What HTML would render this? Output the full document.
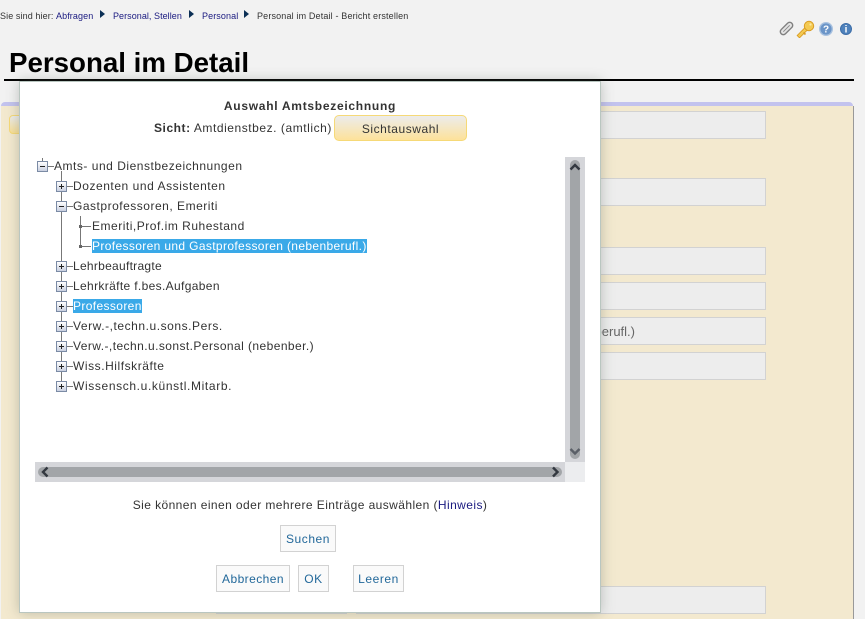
<!DOCTYPE html>
<html lang="de">
<head>
<meta charset="utf-8">
<title>Personal im Detail</title>
<style>
html,body{margin:0;padding:0}
body{width:865px;height:619px;position:relative;overflow:hidden;background:#f2f2f2;font-family:"Liberation Sans",sans-serif}
.a{position:absolute;white-space:nowrap}
.crumb{font-size:9px;top:11px;line-height:11px;color:#333;letter-spacing:.1px}
.crumb.l{color:#1a1a80}
.tri{position:absolute;top:10px;width:0;height:0;border-left:5px solid #0b2f55;border-top:4px solid transparent;border-bottom:4px solid transparent}
.inp{position:absolute;left:560px;width:204px;height:26px;background:#ededed;border:1px solid #d2d2d2}
#modal{position:absolute;left:19px;top:81px;width:580px;height:530px;background:#fff;border:1px solid #b9c6c0;box-shadow:0 0 12px rgba(90,100,90,.35)}
.t{position:absolute;font-size:12px;line-height:14px;letter-spacing:.55px;color:#333;white-space:nowrap}
.sel{background:#3aa9e8;color:#fff}
.box{position:absolute;width:9px;height:9px;border:1px solid #7b8ba5;background:linear-gradient(#fff,#c9d0e0)}
.box:before{content:"";position:absolute;left:2px;top:4px;width:5px;height:1px;background:#222}
.box.p:after{content:"";position:absolute;left:4px;top:2px;width:1px;height:5px;background:#222}
.h{position:absolute;height:1px;background:#777}
.v{position:absolute;width:1px;background:#777}
.dot{position:absolute;width:3px;height:3px;background:#666}
.btn{position:absolute;box-sizing:border-box;height:27px;border:1px solid #d2d2d2;background:#fafafa;color:#22689a;font-size:12px;line-height:27px;text-align:center;letter-spacing:.55px;white-space:nowrap}
</style>
</head>
<body>
<div class="a crumb" style="left:0">Sie sind hier:</div>
<div class="a crumb l" style="left:56px">Abfragen</div>
<div class="tri" style="left:100px"></div>
<div class="a crumb l" style="left:113px;letter-spacing:.05px">Personal, Stellen</div>
<div class="tri" style="left:189px"></div>
<div class="a crumb l" style="left:202px">Personal</div>
<div class="tri" style="left:244px"></div>
<div class="a crumb" style="left:257px;letter-spacing:.155px">Personal im Detail - Bericht erstellen</div>

<svg class="a" style="left:778px;top:20px" width="80" height="18" viewBox="0 0 80 18">
<g transform="rotate(-45 8.500 8.500)"><rect x="1" y="5.500" width="15" height="6" rx="3" fill="#e4e4e4" stroke="#808080" stroke-width="1.400"/><path d="M4 8.500h9" stroke="#8a8a8a" stroke-width="1"/></g>
<path d="M27.500 9.500l-6 6" stroke="#d99c24" stroke-width="4.200" stroke-linecap="square"/>
<path d="M27.500 9.500l-6 6" stroke="#f4ca52" stroke-width="2.400" stroke-linecap="square"/>
<path d="M25.500 12.500l2 2" stroke="#d99c24" stroke-width="1.600"/>
<circle cx="31" cy="6" r="4.700" fill="#f4ca52" stroke="#d99c24" stroke-width="1"/>
<circle cx="32.500" cy="4.500" r="1.100" fill="#fbe9a8"/>
<circle cx="48" cy="9" r="6.300" fill="#6b95c8" stroke="#a9c2e0" stroke-width="1.400"/>
<text x="48" y="12.500" font-family="Liberation Sans" font-size="10" font-weight="bold" fill="#fff" text-anchor="middle">?</text>
<circle cx="68" cy="9" r="5.500" fill="#4f82bc" stroke="#3d6ea8" stroke-width="1"/>
<text x="68" y="12.500" font-family="Liberation Sans" font-size="10" font-weight="bold" fill="#fff" text-anchor="middle">i</text>
</svg>

<div class="a" style="left:9px;top:47px;font-size:27.7px;line-height:32px;font-weight:bold;color:#000">Personal im Detail</div>
<div class="a" style="left:4px;top:79px;width:850px;height:2px;background:#000"></div>

<div class="a" style="left:1px;top:102px;width:852px;height:4px;background:#c3c3ee;border-radius:4px 4px 0 0"></div>
<div class="a" style="left:1px;top:106px;width:852px;height:513px;background:#f3e9cf;border-right:1px solid #999"></div>
<div class="a" style="left:9px;top:115px;width:30px;height:17px;border:1px solid #f6d977;border-radius:4px;background:linear-gradient(#ececec,#f9df95)"></div>

<div class="inp" style="top:111px"></div>
<div class="inp" style="top:178px"></div>
<div class="inp" style="top:247px"></div>
<div class="inp" style="top:282px"></div>
<div class="inp" style="top:317px"></div>
<div class="a" style="right:230px;top:325px;font-size:13px;line-height:14px;color:#666">(nebenberufl.)</div>
<div class="inp" style="top:352px"></div>
<div class="inp" style="top:586px;left:216px;width:129px"></div>
<div class="inp" style="top:586px;left:356px;width:408px"></div>

<div id="modal"></div>

<div class="a" style="left:20px;width:580px;top:99px;text-align:center;font-size:12px;line-height:14px;font-weight:bold;color:#333;letter-spacing:.72px">Auswahl Amtsbezeichnung</div>
<div class="t" style="left:154px;top:121px"><b>Sicht:</b> Amtdienstbez. (amtlich)</div>
<div class="a" style="left:334px;top:115px;box-sizing:border-box;width:133px;height:26px;border:1px solid #f6d977;border-radius:5px;background:linear-gradient(#ececec,#fde29a);font-size:12px;line-height:26px;text-align:center;color:#333;letter-spacing:.55px">Sichtauswahl</div>

<div class="v" style="left:42px;top:158px;height:4px"></div>
<div class="v" style="left:61px;top:171px;height:215px"></div>
<div class="v" style="left:80px;top:216px;height:30px"></div>
<div class="dot" style="left:79px;top:225px"></div>
<div class="dot" style="left:79px;top:245px"></div>
<div class="h" style="left:82px;top:226px;width:9px"></div>
<div class="h" style="left:82px;top:246px;width:9px"></div>

<div class="box" style="left:37px;top:161px"></div><div class="h" style="left:48px;top:166px;width:6px"></div>
<div class="t" style="left:54px;top:159px;letter-spacing:.52px">Amts- und Dienstbezeichnungen</div>
<div class="box p" style="left:56px;top:181px"></div><div class="h" style="left:67px;top:186px;width:6px"></div>
<div class="t" style="left:73px;top:179px">Dozenten und Assistenten</div>
<div class="box" style="left:56px;top:201px"></div><div class="h" style="left:67px;top:206px;width:6px"></div>
<div class="t" style="left:73px;top:199px;letter-spacing:.51px">Gastprofessoren, Emeriti</div>
<div class="t" style="left:92px;top:219px;letter-spacing:.51px">Emeriti,Prof.im Ruhestand</div>
<div class="t sel" style="left:92px;top:239px;letter-spacing:.36px">Professoren und Gastprofessoren (nebenberufl.)</div>
<div class="box p" style="left:56px;top:261px"></div><div class="h" style="left:67px;top:266px;width:6px"></div>
<div class="t" style="left:73px;top:259px;letter-spacing:.28px">Lehrbeauftragte</div>
<div class="box p" style="left:56px;top:281px"></div><div class="h" style="left:67px;top:286px;width:6px"></div>
<div class="t" style="left:73px;top:279px;letter-spacing:.35px">Lehrkräfte f.bes.Aufgaben</div>
<div class="box p" style="left:56px;top:301px"></div><div class="h" style="left:67px;top:306px;width:6px"></div>
<div class="t sel" style="left:73px;top:299px;letter-spacing:.37px">Professoren</div>
<div class="box p" style="left:56px;top:321px"></div><div class="h" style="left:67px;top:326px;width:6px"></div>
<div class="t" style="left:73px;top:319px">Verw.-,techn.u.sons.Pers.</div>
<div class="box p" style="left:56px;top:341px"></div><div class="h" style="left:67px;top:346px;width:6px"></div>
<div class="t" style="left:73px;top:339px;letter-spacing:.43px">Verw.-,techn.u.sonst.Personal (nebenber.)</div>
<div class="box p" style="left:56px;top:361px"></div><div class="h" style="left:67px;top:366px;width:6px"></div>
<div class="t" style="left:73px;top:359px">Wiss.Hilfskräfte</div>
<div class="box p" style="left:56px;top:381px"></div><div class="h" style="left:67px;top:386px;width:6px"></div>
<div class="t" style="left:73px;top:379px;letter-spacing:.63px">Wissensch.u.künstl.Mitarb.</div>

<div class="a" style="left:565px;top:157px;width:20px;height:305px;background:#d5d6da"></div>
<div class="a" style="left:570px;top:160px;width:10px;height:299px;background:#a2a5a8;border-radius:5px"></div>
<svg class="a" style="left:565px;top:157px" width="20" height="305" viewBox="0 0 20 305">
<path d="M5.500 12.500l4.500-4.500 4.500 4.500" fill="none" stroke="#333840" stroke-width="2.400"/>
<path d="M5.500 292l4.500 4.500 4.500-4.500" fill="none" stroke="#5a5f67" stroke-width="2.400"/>
</svg>
<div class="a" style="left:35px;top:462px;width:530px;height:20px;background:#d5d6da"></div>
<div class="a" style="left:38px;top:467px;width:524px;height:10px;background:#a2a5a8;border-radius:5px"></div>
<svg class="a" style="left:35px;top:462px" width="530" height="20" viewBox="0 0 530 20">
<path d="M12.500 5.500l-4.500 4.500 4.500 4.500" fill="none" stroke="#333840" stroke-width="2.400"/>
<path d="M518 5.500l4.500 4.500-4.500 4.500" fill="none" stroke="#333840" stroke-width="2.400"/>
</svg>
<div class="a" style="left:565px;top:462px;width:20px;height:20px;background:#ecedef"></div>

<div class="a" style="left:20px;width:580px;top:498px;text-align:center;font-size:12px;line-height:14px;color:#333;letter-spacing:.42px">Sie können einen oder mehrere Einträge auswählen (<span style="color:#1a1a80">Hinweis</span>)</div>

<div class="btn" style="left:280px;top:525px;width:56px">Suchen</div>
<div class="btn" style="left:216px;top:565px;width:74px;letter-spacing:.43px">Abbrechen</div>
<div class="btn" style="left:298px;top:565px;width:31px">OK</div>
<div class="btn" style="left:353px;top:565px;width:51px">Leeren</div>
</body>
</html>
